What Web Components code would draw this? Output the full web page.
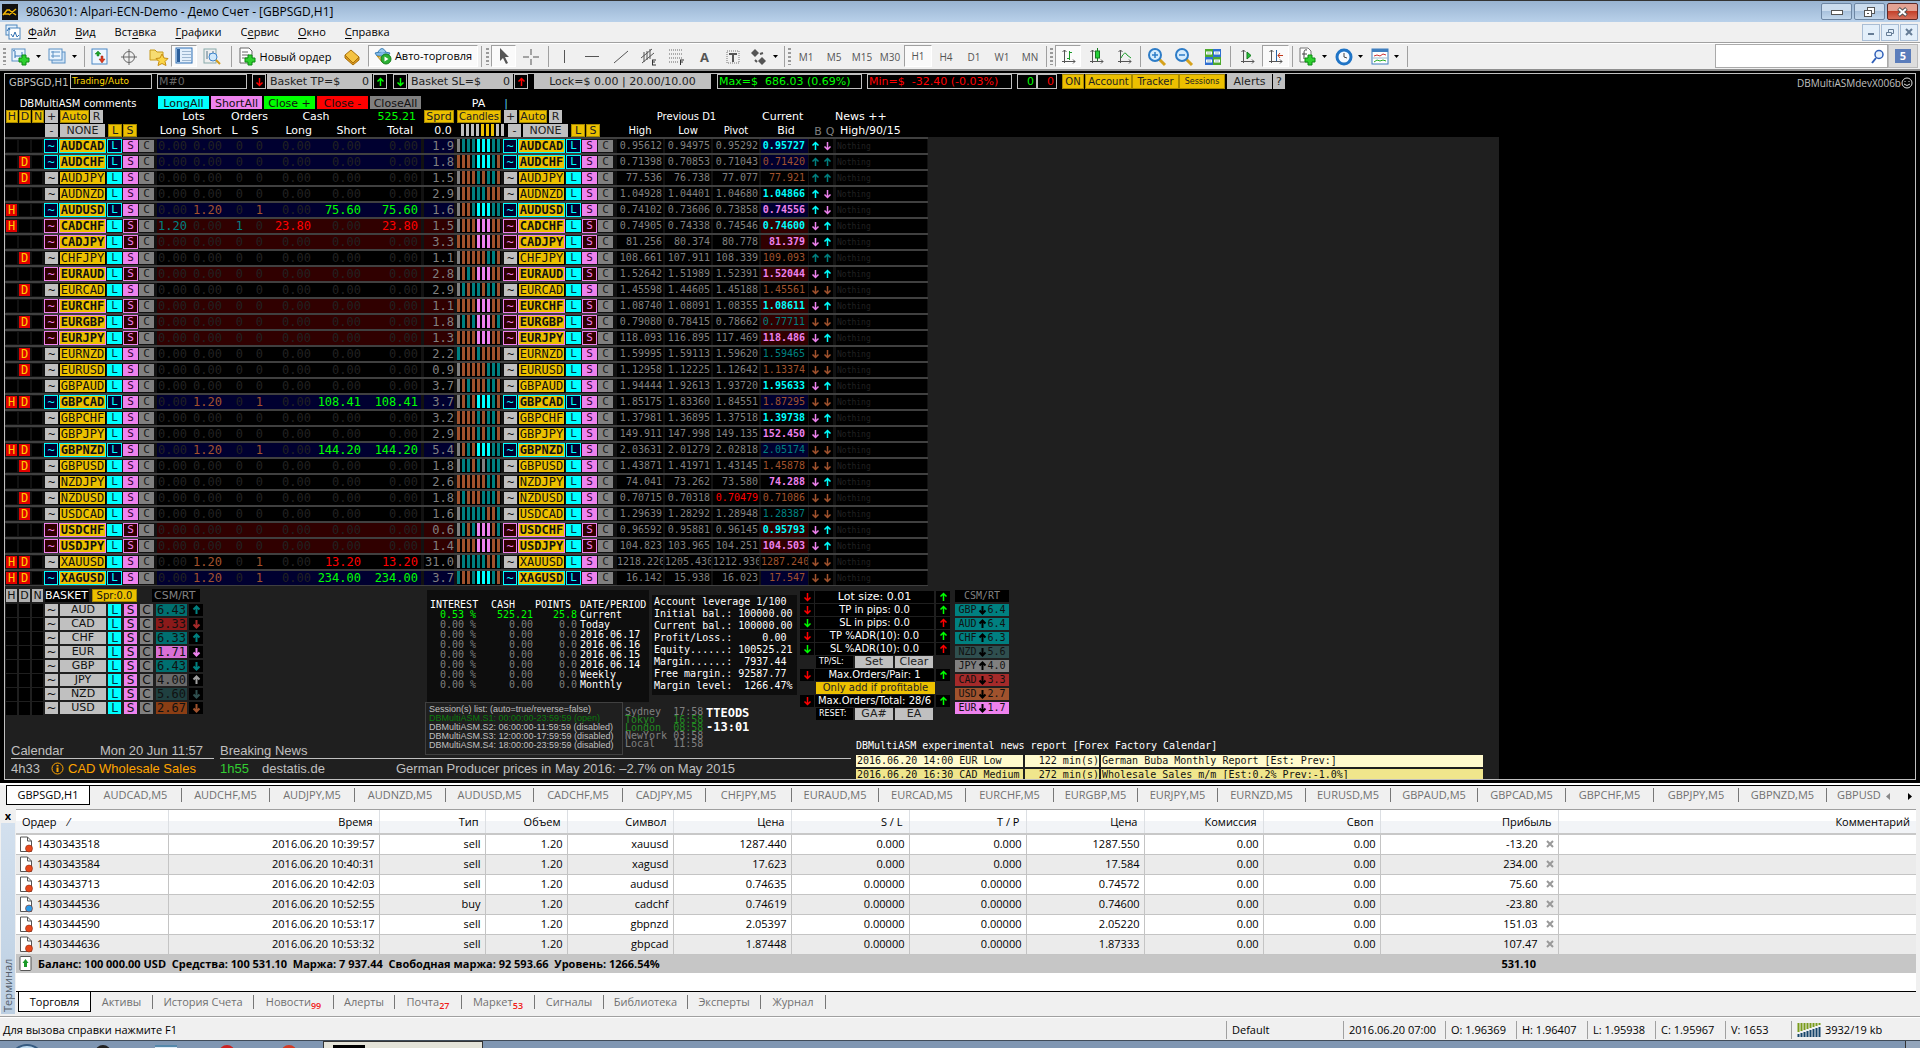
<!DOCTYPE html>
<html lang="ru">
<head>
<meta charset="utf-8">
<title>9806301: Alpari-ECN-Demo - Демо Счет - [GBPSGD,H1]</title>
<style>
html,body{margin:0;height:100%}
body{background:#f0f0f0;font:11px/14px "Open Sans","Noto Sans",sans-serif;color:#000;overflow:hidden}
</style>
</head>
<body>
<trade-app></trade-app>
<script>
const RESET = `*{box-sizing:border-box}button{font:inherit;color:inherit;border:0;padding:0;margin:0;background:none;cursor:default;display:block;white-space:nowrap;overflow:hidden;text-align:center}svg{display:block;flex:none}`;
const define = (name, css, render) => customElements.define(name, class extends HTMLElement {
  constructor() { super(); this.attachShadow({mode: 'open'}); }
  connectedCallback() { this.shadowRoot.innerHTML = `<style>${RESET}${css}</style>${render(this)}`; }
});
const svg = (w, h, body) => `<svg width="${w}" height="${h}" viewBox="0 0 ${w} ${h}" fill="none" aria-hidden="true">${body}</svg>`;

/* ---------- icons ---------- */
const plus = (x, y) => `<path d="M${x+3} ${y}h4v3h3v4h-3v3h-4v-3h-3v-4h3z" fill="#2fd02f" stroke="#0b8a12"/>`;
const axes = '<path d="M4.500 2v13M2 13.500h13M2.500 4l2-2 2 2M13 11.500l2 2-2 2" stroke="#555"/>';
const I = {
  logo: svg(16,16,'<rect width="16" height="16" fill="#111"/><path d="M1 11l4-5h3M2 10h5M7 6l7 5M14 5l-7 6" stroke="#f2b705" stroke-width="1.500"/>'),
  mdi: svg(16,16,'<rect x="1" y="1" width="11" height="10" fill="#e4f1fc" stroke="#4c86bd"/><rect x="4" y="4" width="11" height="11" fill="#fff" stroke="#4c86bd"/><path d="M2 7l2-3 1 2M6 10l2 3 2-5 2 5 2-2" stroke="#2f6fb0"/>'),
  newchart: svg(20,20,'<rect x="1" y="2" width="13" height="12" fill="#eaf4fd" stroke="#5a90c4"/><path d="M4 4v7M4 9h7M11 5v5M2 4l2-1" stroke="#3474b5"/>'+plus(8,8)),
  profiles: svg(20,20,'<rect x="5" y="5" width="13" height="11" fill="#cfe3f6" stroke="#5a90c4"/><rect x="2" y="2" width="13" height="11" fill="#eaf4fd" stroke="#5a90c4"/><path d="M4 5h9M4 9h9M6 4v7" stroke="#5a90c4"/>'),
  market: svg(18,18,'<rect x="1" y="1" width="15" height="15" fill="#eef6fe" stroke="#4b88c6"/><path d="M6 8V6H4l3-3 3 3H8v2z" fill="#1ea52a" stroke="#157a1e" stroke-width=".5"/><path d="M10 8v3H8l3 4 3-4h-2V8z" fill="#e03a1e" stroke="#9b2410" stroke-width=".5"/>'),
  target: svg(18,18,'<circle cx="9" cy="9" r="5.500" stroke="#666"/><path d="M9 1v16M1 9h16" stroke="#666"/>'),
  star: svg(20,18,'<path d="M1 2h5l2 2h6v8H1z" fill="#f6dc72" stroke="#c79a1c"/><path d="M13 6l2 4 4 .5-3 3 1 4-4-2-4 2 1-4-3-3 4-.5z" fill="#fbd648" stroke="#c78d12"/>'),
  nav: svg(18,18,'<rect x="1" y="1" width="16" height="15" fill="#e3effb" stroke="#2c6fb5"/><rect x="2" y="2" width="3" height="13" fill="#2c5f9b"/><path d="M7 4.500h9M7 7.500h9M7 10.500h9M7 13.500h9" stroke="#9db6cf"/>'),
  tester: svg(20,18,'<rect x="2" y="1" width="12" height="14" fill="#eee" stroke="#8aa"/><path d="M5 3v8M8 5v6M11 3v5" stroke="#578"/><circle cx="11" cy="9" r="4" fill="#cfe8fb" stroke="#3c83cc"/><path d="M14 12l4 4" stroke="#d49b1a" stroke-width="2"/>'),
  order: svg(18,20,'<path d="M1 1h9l3 3v12H1z" fill="#fff" stroke="#666"/><path d="M3 5h6M3 8h7M3 11h6" stroke="#666"/>'+plus(6,8)),
  book: svg(18,18,'<path d="M2 7l6-5 8 7-6 6z" fill="#f5c342" stroke="#a8700b"/><path d="M2 7v3l8 7 6-5V9l-6 6z" fill="#d9971c" stroke="#a8700b"/>'),
  auto: svg(18,18,'<path d="M1 6q7-3 15 0l-2 3H3z" fill="#7fb9e8" stroke="#3c7fb5"/><path d="M4 5q4-7 8 0" fill="#9accf0" stroke="#3c7fb5"/><path d="M3 9q5 3 10 0l-4 7z" fill="#f3cf6a" stroke="#b98d1c"/><circle cx="12" cy="12" r="5" fill="#2cb135" stroke="#157f1c"/><path d="M10.500 9.500v5l4-2.500z" fill="#fff"/>'),
  cursor: svg(14,18,'<path d="M3 1v13l3-3 3 6 2-1-3-6h4z" fill="#555"/>'),
  cross: svg(18,18,'<path d="M9 1v6M9 11v6M1 9h6M11 9h6" stroke="#555"/>'),
  v: svg(3,16,'<path d="M1.500 1v13" stroke="#555"/>'),
  h: svg(14,3,'<path d="M0 1.500h14" stroke="#555"/>'),
  d: svg(16,14,'<path d="M1 13L15 1" stroke="#555"/>'),
  chan: svg(18,18,'<path d="M1 10L12 1M2 15L14 5M4 4v10M7 3v9M10 1v10" stroke="#555"/><path d="M12 12h4M12 14h3M12 17h4M12.500 12v5" stroke="#333"/>'),
  fib: svg(18,18,'<path d="M1 2h14M1 6h14M1 10h14M1 14h9" stroke="#666" stroke-dasharray="1 1"/><path d="M12 12h4M12 14h3M12.500 12v5" stroke="#333"/>'),
  txt: svg(16,16,'<rect x="2" y="2" width="12" height="12" stroke="#777" stroke-dasharray="1 1"/><path d="M4 5h8M8 5v8" stroke="#555" stroke-width="2"/>'),
  shapes: svg(18,18,'<path d="M5 1l4 4-4 4-4-4zM12 9l4 4-4 4-4-4z" fill="#555"/><path d="M10 6l3-1M5 12l2 2" stroke="#555" stroke-width="2"/>'),
  bars: svg(17,17,axes+'<path d="M9.500 3v9M7 10.500h2M10 4.500h2" stroke="#1a9a28"/>'),
  candle: svg(17,17,axes+'<path d="M9.500 0v13" stroke="#157a1e"/><rect x="7.500" y="3" width="4" height="7" fill="#25d238" stroke="#157a1e"/>'),
  line: svg(17,17,axes+'<path d="M5 10q4-8 6-3l4 3" stroke="#1a9a28"/>'),
  zin: svg(20,20,'<path d="M12 12l6 6" stroke="#d6a21c" stroke-width="3"/><circle cx="8" cy="8" r="6" fill="#d6ecfd" stroke="#2d7cc7" stroke-width="2"/><path d="M5 8h6M8 5v6" stroke="#2d7cc7" stroke-width="1.500"/>'),
  zout: svg(20,20,'<path d="M12 12l6 6" stroke="#d6a21c" stroke-width="3"/><circle cx="8" cy="8" r="6" fill="#d6ecfd" stroke="#2d7cc7" stroke-width="2"/><path d="M5 8h6" stroke="#2d7cc7" stroke-width="1.500"/>'),
  tiles: svg(18,18,'<rect x="1" y="1" width="8" height="8" fill="#4eaa2e"/><rect x="9" y="1" width="8" height="8" fill="#2f6fd0"/><rect x="1" y="9" width="8" height="8" fill="#2f6fd0"/><rect x="9" y="9" width="8" height="8" fill="#4eaa2e"/><path d="M2 5h6M10 5h6M2 13h6M10 13h6" stroke="#fff" stroke-width="3"/><path d="M3 5h4M11 5h4M3 13h4M11 13h4" stroke="#9bb"/>'),
  scroll: svg(17,17,axes+'<path d="M8 4v7l4-3.500z" fill="#25c238" stroke="#157a1e"/>'),
  shift: svg(17,17,axes+'<path d="M9.500 2v11" stroke="#2563a8"/><path d="M11 7.500h5M13 5l-2 2.500 2 2.500" stroke="#c0371a"/>'),
  ind: svg(18,20,'<path d="M1 1h8l3 3v11H1z" fill="#fff" stroke="#777"/><path d="M8 3q-3-1-3 3v6M3 7h5" stroke="#444"/>'+plus(6,8)),
  clock: svg(18,18,'<circle cx="9" cy="9" r="7" fill="#f4faff" stroke="#1f74c6" stroke-width="3"/><path d="M9 5v4l3 1" stroke="#444"/>'),
  templ: svg(18,18,'<rect x="1" y="1" width="16" height="15" fill="#fff" stroke="#3f7fbf"/><rect x="1" y="1" width="16" height="3" fill="#3f7fbf"/><path d="M3 8l3-1 3 1 3-2 3 1" stroke="#c33"/><path d="M1 10h16" stroke="#9bc"/><path d="M3 14l3-2 3 1 3-1 3 1" stroke="#2a2"/>'),
  caret: svg(5,3,'<path d="M0 0h5L2.500 3z" fill="#000"/>'),
  lens: svg(15,15,'<path d="M6 9l-4 5" stroke="#2f5fb8" stroke-width="2"/><circle cx="9" cy="5.500" r="4" fill="#e8f2fc" stroke="#2f5fb8" stroke-width="1.500"/>'),
  smile: svg(12,12,'<circle cx="6" cy="6" r="5" stroke="#ddd"/><path d="M4 4v1M8 4v1" stroke="#ddd"/><path d="M3 7q3 3 6 0" stroke="#ddd"/>'),
  signal: svg(24,14,'<path d="M1.500 0v9M4.500 0v8M7.500 0v7M10.500 0v6M13.500 0v5M16.500 0v4M19.500 0v3M22.500 0v2" stroke="#7a9c1c" stroke-width="2"/><path d="M1.500 11v3M4.500 10v4M7.500 9v5M10.500 8v6M13.500 7v7M16.500 6v8M19.500 5v9M22.500 4v10" stroke="#17456a" stroke-width="2"/>')
};
const arrow = (dir, col, bold) => svg(9,10,`<path d="${dir === 'u' ? 'M4.500 9V1.500M1.500 4.500l3-3 3 3' : 'M4.500 1v7.500M1.500 5.500l3 3 3-3'}" stroke="${col}" stroke-width="${bold ? 2 : 1.5}"/>`);

/* ---------- window chrome ---------- */
define('title-bar', `
:host{display:flex;align-items:center;height:22px;border-top:1px solid #333;background:linear-gradient(#98b3d1,#b9d1ea);padding:0 2px;font-size:12px}
span{flex:1;padding-left:8px}
.b{width:31px;height:17px;border:1px solid #6d86a3;border-radius:2px;margin-left:2px;display:grid;place-items:center;background:linear-gradient(#cbdcee 45%,#a9c2dd 50%,#c2d7ec)}
.x{background:linear-gradient(#e3a293 45%,#c3412b 50%,#d7715c);border-color:#5d2a28}`,
() => `${I.logo}<span>9806301: Alpari-ECN-Demo - Демо Счет - [GBPSGD,H1]</span>
<button class="b" aria-label="Свернуть">${svg(12,6,'<rect x="0.500" y="1.500" width="11" height="4" fill="#fff" stroke="#555"/>')}</button>
<button class="b" aria-label="Восстановить">${svg(13,12,'<rect x="4.500" y="1.500" width="7" height="6" fill="#fff" stroke="#555"/><rect x="1.500" y="4.500" width="7" height="6" fill="#fff" stroke="#555"/><path d="M4 7.500h2" stroke="#555"/>')}</button>
<button class="b x" aria-label="Закрыть">${svg(11,10,'<path d="M1.500 1.500l8 7M9.500 1.500l-8 7" stroke="#555" stroke-width="4"/><path d="M2 2l7 6M9 2L2 8" stroke="#fff" stroke-width="2"/>')}</button>`);

define('menu-bar', `
:host{display:flex;align-items:center;height:21px;background:#f0f0f0;border-bottom:1px solid #a0a0a0;padding:0 2px 0 5px;font-size:11px}
nav{display:flex;flex:1;padding-left:7px;gap:19px}
u{text-underline-offset:2px}
.m{width:18px;height:17px;border:1px solid #a9bdd4;margin-left:1px;background:#e3effa;display:grid;place-items:center}`,
() => `${I.mdi}<nav>${['<u>Ф</u>айл','<u>В</u>ид','Вст<u>а</u>вка','<u>Г</u>рафики','С<u>е</u>рвис','<u>О</u>кно','<u>С</u>правка'].map(t => `<button>${t}</button>`).join('')}</nav>
<button class="m" aria-label="Свернуть окно">${svg(8,8,'<path d="M1 6h6" stroke="#667d96" stroke-width="2"/>')}</button>
<button class="m" aria-label="Восстановить окно">${svg(10,9,'<path d="M3.500 4V1.500h5v4H7M1.500 4.500h5v3h-5z" stroke="#667d96"/>')}</button>
<button class="m" aria-label="Закрыть окно">${svg(8,8,'<path d="M1 1l6 6M7 1L1 7" stroke="#667d96" stroke-width="2"/>')}</button>`);

define('tool-bar', `
:host{display:flex;height:28px;background:#f0f0f0;border-top:1px solid #fff;border-bottom:2px solid #8f8f8f;align-items:stretch;font-size:11px}
.t{display:flex;align-items:center;justify-content:center;gap:3px;overflow:visible}
.c{justify-content:flex-start;padding-left:3px;gap:5px}
.p{border:1px solid #a0a0a0;border-right-color:#fff;border-bottom-color:#fff;background:#fafafa;margin:1px 0 2px}
.s{display:flex;justify-content:center;padding:2px 0}.s::before{content:"";width:1px;background:#a0a0a0}
.g{display:flex;justify-content:center;padding:4px 0}.g::before{content:"";width:3px;background:repeating-linear-gradient(#9a9a9a 0 2px,#f0f0f0 2px 4px)}
.f{color:#555;font-size:10px}
.a{font-weight:700;color:#555;font-size:13px}
label{margin-left:auto;display:flex;align-items:center;width:173px;background:#fff;border:1px solid #aaa;margin-bottom:1px;padding-right:2px}
input{flex:1;min-width:0;border:0;outline:0;background:none;font:inherit}
.m{width:30px;background:#ddd;border:1px solid #bbb;display:grid;place-items:center;margin:0 2px 1px 0}
.m b{background:#5b7dbb;color:#fff;width:16px;height:14px;line-height:14px;font-size:11px}`,
() => {
  const items = [['g',8],['newchart',36,1],['profiles',36,1],['s',8],['market',24],['target',34],['star',25],['nav',26,0,1],['tester',30],['s',8],['order',100,0,0,'Новый ордер'],['book',33],['auto',110,0,1,'Авто-торговля'],['s',6],['g',7],['cursor',25,0,1],['cross',29],['s',6],['v',26],['h',30],['d',28],['chan',28],['fib',28],['A',27],['txt',29],['shapes',35,1],['s',5],['g',5],...['M1','M5','M15','M30','H1','H4','D1','W1','MN'].map(x => ['tf',28,0,x === 'H1',x]),['s',4],['g',7],['bars',26,0,1],['candle',30],['line',26],['s',6],['zin',27],['zout',28],['tiles',29],['s',6],['scroll',29],['shift',27,0,1],['s',7],['ind',36,1],['clock',36,1],['templ',36,1],['s',6]];
  return items.map(([k,w,c,p,l]) => k === 's' || k === 'g' ? `<i class="${k}" style="width:${w}px"></i>`
    : k === 'A' ? `<button class="t a" style="width:${w}px">A</button>`
    : `<button class="t${c ? ' c' : ''}${p ? ' p' : ''}${k === 'tf' ? ' f' : ''}" style="width:${w}px" aria-label="${l || k}">${I[k] || ''}${l || ''}${c ? I.caret : ''}</button>`).join('')
  + `<label><input type="search" aria-label="Поиск">${I.lens}</label><button class="m"><b>5</b></button>`;
});

/* ---------- shared dashboard rules ---------- */
const MONO = '"DejaVu Sans Mono",monospace', VERD = '"DejaVu Sans",Verdana,sans-serif';

define('info-bar', `
:host{display:flex;height:22px;padding:0 2px 0 4px;font:11px/13px ${VERD};color:#c0c0c0;align-items:flex-start}
:host>*{height:15px;margin-right:1px;flex:none}
.n{font-size:10px;width:60px;line-height:17px}
.o{border:1px solid #c0c0c0}
.y{background:#ecc000;color:#222;border:1px solid #a88a00;text-align:center;font-size:10px;line-height:14px}
.s{background:#c0c0c0;color:#222;white-space:pre;text-align:center;line-height:15px}
.b{display:flex;justify-content:space-between;width:105px;padding:0 3px}
.a{width:14px;border:1px solid #c0c0c0;display:grid;place-items:center}
.l{margin-left:5px}
.v{margin-left:auto;display:flex;align-items:center;font-size:10px;height:18px;margin-right:0;font-family:"Open Sans",sans-serif}`,
() => `<span class="n">GBPSGD,H1</span>
<button class="o" style="width:82px;color:#ffd700;font-size:9px;line-height:11px;text-align:left;padding-left:1px">Trading/Auto</button>
<button class="o" style="width:90px;margin-left:4px;color:#666;text-align:left;padding-left:1px">M#0</button>
<button class="a" style="margin-left:4px" aria-label="TP -">${arrow('d','#f00')}</button><span class="s b"><span>Basket TP=$</span><span>0</span></span><button class="a" aria-label="TP +">${arrow('u','#0f0')}</button>
<button class="a l" aria-label="SL -">${arrow('d','#0f0')}</button><span class="s b"><span>Basket SL=$</span><span>0</span></span><button class="a" aria-label="SL +">${arrow('u','#f00')}</button>
<span class="s l" style="width:177px">Lock=$ 0.00 | 20.00/10.00</span>
<span class="o l" style="width:145px;color:#0f0;white-space:pre;padding-left:1px">Max=$  686.03 (0.69%)</span>
<span class="o" style="width:145px;margin-left:4px;color:#f00;white-space:pre;padding-left:1px">Min=$  -32.40 (-0.03%)</span>
<span class="o" style="width:20px;margin-left:4px;color:#0f0;text-align:right;padding-right:2px;margin-right:0">0</span><span class="o" style="width:20px;color:#f00;text-align:right;padding-right:2px">0</span>
<button class="y" style="width:22px;margin-left:4px">ON</button><button class="y" style="width:47px;margin-right:0">Account</button><button class="y" style="width:47px;margin-right:0">Tracker</button><button class="y" style="width:46px;font-size:8px">Sessions</button>
<button class="s" style="width:45px;margin-left:1px">Alerts</button><button class="s" style="width:12px">?</button>
<span class="v">DBMultiASMdevX006b${I.smile}</span>`);

define('table-head', `
:host{display:block;width:923px;height:41px;color:#fff;font:11px/13px ${VERD}}
.r{display:flex;height:14px;padding-left:1px;align-items:flex-start}
.r>*{height:13px;flex:none;white-space:nowrap}
.top{color:#111}.top>*{line-height:15px}
.y{background:#ecc000;color:#222;border:1px solid #a88a00;line-height:12px}
.g{background:#c0c0c0;color:#222;line-height:13px}
.c{text-align:center}.e{text-align:right}
.sm{font-size:10px}.q{color:#808080;line-height:15px}
.bars{display:flex;gap:2px;width:44px}.bars i{width:3px;height:12px;background:#c0c0c0}.bars i.k{background:#ecc000}`,
() => {
  const s = (w, t = '', cls = '', st = '') => `<span class="${cls}" style="width:${w}px;${st}">${t}</span>`;
  const b = (w, t, cls = '', m = 0, st = '') => `<button class="${cls}" style="width:${w}px;margin-right:${m}px;${st}">${t}</button>`;
  return `<div class="r top">${s(144,'DBMultiASM comments','c sm','color:#fff;margin-right:8px')}${b(51,'LongAll','',2,'background:#0ff')}${b(51,'ShortAll','',2,'background:#ee82ee')}${b(51,'Close +','',2,'background:#0f0')}${b(51,'Close -','',2,'background:#f00')}${b(51,'CloseAll','',36,'background:#808080')}${s(43,'PA','c','color:#fff')}${s(8,'|','e','color:#5ce')}</div>
<div class="r">${b(12,'H','y',1)}${b(12,'D','y',1)}${b(12,'N','y',1)}${b(13,'+','g',2)}${b(29,'Auto','y',1)}${b(13,'R','g',54)}${s(73,'Lots','c')}${s(39,'Orders','c')}${s(94,'Cash','c')}${s(53,'525.21','e','color:#0f0;margin-right:8px')}${b(30,'Sprd','y',3)}${b(44,'Candles','y',3,'font-size:10px')}${b(13,'+','g',2)}${b(28,'Auto','y',2)}${b(13,'R','g',54)}${s(141,'Previous D1','c sm')}${s(78,'Current','','padding-left:5px')}${s(70,'News ++')}</div>
<div class="r">${b(13,'-','g',2,'margin-left:39px')}${b(45,'NONE','g',3)}${b(14,'L','y',1)}${b(14,'S','y',20)}${s(32,'Long','c')}${s(35,'Short','c')}${s(21,'L','c')}${s(20,'S','c')}${s(47,'Long','e')}${s(54,'Short','e')}${s(47,'Total','e','margin-right:15px')}${s(30,'0.0','c','margin-right:3px')}<span class="bars">${[0,0,0,0,1,1,1,0,0].map(k => `<i class="${k ? 'k' : ''}"></i>`).join('')}</span>${b(13,'-','g',2,'margin-left:3px')}${b(45,'NONE','g',3)}${b(14,'L','y',1)}${b(14,'S','y',16)}${s(48,'High','c sm')}${s(48,'Low','c sm')}${s(48,'Pivot','c sm')}${s(52,'Bid','c')}${s(12,'B','q c')}${s(12,'Q','q c','margin-right:4px')}${s(80,'High/90/15')}</div>`;
});

const COL = {g:'#808080',t:'#008080',s:'#a0522d',c:'#00ffff',v:'#ee82ee'};
/* pair, bias, flags, position, spread, candles, high, low, pivot, bid, bid colour, B arrow, Q arrow */
const PAIRS = `AUDCAD|b||0|1.9|gtttccctt|0.95612|0.94975|0.95292|0.95727|c|uc|dv
AUDCHF|b|D|0|1.8|ssstcccts|0.71398|0.70853|0.71043|0.71420|s|ut|ut
AUDJPY|n|D|0|1.5|gssststts|77.536|76.738|77.077|77.921|s|ut|ut
AUDNZD|n||0|2.9|gsstttsss|1.04928|1.04401|1.04680|1.04866|c|uc|dv
AUDUSD|b|H|S75.60|1.6|gsstccctt|0.74102|0.73606|0.73858|0.74556|v|uc|dv
CADCHF|r|H|L23.80|1.5|gsssvvvss|0.74905|0.74338|0.74546|0.74600|c|dv|uc
CADJPY|r||0|3.3|ssssvvvss|81.256|80.374|80.778|81.379|v|dv|uc
CHFJPY|n|D|0|1.1|gssssstts|108.661|107.911|108.339|109.093|s|ut|ut
EURAUD|r||0|2.8|gstsvvvss|1.52642|1.51989|1.52391|1.52044|v|dv|uc
EURCAD|n|D|0|2.9|gtsttstts|1.45598|1.44605|1.45188|1.45561|s|ds|ds
EURCHF|r||0|1.1|ssssvvvss|1.08740|1.08091|1.08355|1.08611|c|dv|uc
EURGBP|r|D|0|1.8|gtstvvvst|0.79080|0.78415|0.78662|0.77711|t|ds|ds
EURJPY|r||0|1.3|ssssvvvss|118.093|116.895|117.469|118.486|v|dv|uc
EURNZD|n|D|0|2.2|tssstssss|1.59995|1.59113|1.59620|1.59465|t|ds|ds
EURUSD|n|D|0|0.9|gsssssttt|1.12958|1.12225|1.12642|1.13374|s|ds|ds
GBPAUD|n||0|3.7|gstssstts|1.94444|1.92613|1.93720|1.95633|c|dv|uc
GBPCAD|b|HD|S108.41|3.7|gstscccts|1.85175|1.83360|1.84551|1.87295|s|ds|ds
GBPCHF|n||0|3.2|sssststts|1.37981|1.36895|1.37518|1.39738|c|dv|uc
GBPJPY|n||0|2.9|sssststts|149.911|147.998|149.135|152.450|v|dv|uc
GBPNZD|b|HD|S144.20|5.4|gstsccctt|2.03631|2.01279|2.02818|2.05174|t|ds|ds
GBPUSD|n|D|0|1.8|gttstgttt|1.43871|1.41971|1.43145|1.45878|s|ds|ds
NZDJPY|n||0|2.6|sssssstts|74.041|73.262|73.580|74.288|v|dv|uc
NZDUSD|n|D|0|1.8|stsssttts|0.70715|0.70318|0.70479|0.71086|s|ds|ds
USDCAD|n|D|0|1.6|gtttttsst|1.29639|1.28292|1.28948|1.28387|t|ds|ds
USDCHF|r||0|0.6|gtstvvvst|0.96592|0.95881|0.96145|0.95793|c|dv|uc
USDJPY|r||0|1.4|ssssvvvss|104.823|103.965|104.251|104.503|v|dv|uc
XAUUSD|n|HD|R13.20|31.0|gtttttsst|1218.220|1205.430|1212.930|1287.240|s|ds|ds
XAGUSD|b|HD|S234.00|3.7|tsstcccts|16.142|15.938|16.023|17.547|s|ds|ds`.split('\n').map(l => l.split('|'));

define('pair-row', `
:host{display:grid;grid-template-columns:13px 13px 12px 15px 48px 16px 16px 18px 267px 33px 46px 15px 48px 16px 16px 19px 48px 48px 48px 48px 12px 15px 91px;width:923px;height:16px;border-top:2px solid #404040;padding:0 1px;background:#121212;font:12px/14px ${MONO};--k:#c0c0c0;--bg:#000;--fill:#c0c0c0;--ink:#111}
:host([bias=b]){--bg:#000030;--k:#00ffff;--fill:#000030;--ink:#0ff}
:host([bias=r]){--bg:#300000;--k:#ee82ee;--fill:#300000;--ink:#ee82ee}
:host>*{overflow:hidden;white-space:nowrap;height:14px}
.f{background:#000;margin-right:2px;color:#fc0;text-align:center;border:solid #121212;border-width:1px 0;line-height:12px}
.on{background:#e00000}
.w{background:var(--fill);color:var(--ink);border:1px solid var(--k);width:14px;line-height:12px}
:host([bias=n]) .w{width:13px;margin-left:1px;border:solid #121212;border-width:1px 0}
.p{background:#ecc000;color:#111;width:47px;border:1px solid var(--k);line-height:12px}
:host([bias=n]) .p{border-color:#000}
:host(:not([bias=n])) .p{font-weight:700}
.l,.s,.c{width:15px;font-size:11px;line-height:12px;border:solid #121212;border-width:1px 0}
.l{background:#0ff;color:#034}
.s{background:#ee82ee;color:#303}
.c{background:#808080;color:#222}
:host([bias=b]) .l,:host([bias=r]) .s{background:var(--bg);color:var(--k);border:1px solid var(--k)}
.pl{background:var(--bg);width:264px;display:grid;grid-template-columns:30px 35px 21px 20px 48px 50px 57px;text-align:right;color:#222}
.sp{background:var(--bg);color:#808080;text-align:right;width:30px}
.k{display:flex;gap:2px;background:#000;width:44px}.k i{width:3px;height:13px}
.n{background:#000;color:#808080;font-size:10px;width:46px;text-align:right;padding-right:1px;line-height:13px}
.n.x{text-align:left}
.n.b{background:var(--bg);width:47px;padding-right:3px}
.n.bold{font-weight:700}
.a{background:#000;display:grid;place-items:center;width:12px}
.z{background:#000;color:#222;font-size:8px;line-height:15px;padding-left:1px}`,
el => {
  const [pair,bias,fl,pos,spr,can,hi,lo,pv,bid,bc,a1,a2] = PAIRS[el.getAttribute('index')];
  el.setAttribute('bias', bias);
  const kind = pos[0], val = pos.slice(1), v = ['0.00','0.00','0','0','0.00','0.00','0.00'], c = Array(7).fill('');
  if (kind === 'S' || kind === 'R') { v[1]='1.20'; v[3]='1'; v[5]=v[6]=val; c[1]=c[3]='#a0522d'; c[5]=c[6]=kind === 'S' ? '#0f0' : '#f00'; }
  if (kind === 'L') { v[0]='1.20'; v[2]='1'; v[4]=v[6]=val; c[0]=c[2]='#008080'; c[4]=c[6]='#f00'; }
  const trade = `<button class="w">~</button><button class="p">${pair}</button><button class="l">L</button><button class="s">S</button><button class="c">C</button>`;
  const long = hi.length > 7 ? ' x' : '';
  return ['H','D','N'].map(f => `<span class="f${fl.includes(f) ? ' on' : ''}">${fl.includes(f) ? f : ''}</span>`).join('') + trade
  + `<span class="pl">${v.map((t, i) => `<span${c[i] ? ` style="color:${c[i]}"` : ''}>${t}</span>`).join('')}</span><span class="sp">${spr}</span>`
  + `<span class="k">${[...can].map(x => `<i style="background:${COL[x]}"></i>`).join('')}</span>` + trade
  + [hi,lo,pv].map(t => `<span class="n${long}"${t === '0.70479' ? ' style="color:#f00"' : ''}>${t}</span>`).join('')
  + `<span class="n b${long}${'cv'.includes(bc) ? ' bold' : ''}" style="color:${COL[bc]}">${bid}</span>`
  + [a1,a2].map(a => `<span class="a">${arrow(a[0], COL[a[1]])}</span>`).join('') + '<span class="z">Nothing</span>';
});

define('basket-panel', `
:host{display:block;width:199px;font:12px/12px ${VERD};color:#111;padding:3px 0 0 1px}
.h,.r{display:flex}
.h{height:15px;font-size:11px;line-height:13px}.h>*{height:13px;flex:none}
.r{height:14px}.r>*{height:12px;flex:none}
.g{width:11px;margin-right:2px;background:#b0b0b0;text-align:center}
.z{width:11px;margin-right:2px;background:#000;height:13px}
.v{width:31px;font-family:${MONO};text-align:center;margin-left:3px}
.a{width:14px;margin-left:2px;background:#000;display:grid;place-items:center}`,
() => `<div class="h"><button class="g">H</button><button class="g">D</button><button class="g">N</button><span style="width:44px;background:#000;color:#fff">BASKET</span><span style="width:45px;margin-left:3px;background:#ecc000;border:1px solid #a88a00;line-height:11px;font-size:10px;text-align:center">Spr:0.0</span><span style="width:48px;margin-left:15px;background:#000;color:#808080;padding-left:2px">CSM/RT</span></div>`
+ [['AUD','6.43','#007070','u','#008080'],['CAD','3.33','#8b1a1a','d','#a52a2a'],['CHF','6.33','#007070','u','#008080'],['EUR','1.71','#da70d6','d','#ee82ee'],['GBP','6.43','#007070','d','#008080'],['JPY','4.00','#696969','u','#a0a0a0'],['NZD','5.60','#1f4040','d','#2f4f4f'],['USD','2.67','#8b3e14','d','#a0522d']].map(([n,v,b,d,c]) =>
`<div class="r"><i class="z"></i><i class="z"></i><i class="z"></i><button style="width:13px;background:#c0c0c0">~</button><button style="width:46px;margin-left:2px;background:#c0c0c0;font-size:11px">${n}</button><button style="width:13px;margin-left:2px;background:#0ff;color:#034">L</button><button style="width:13px;margin-left:3px;background:#ee82ee">S</button><button style="width:13px;margin-left:3px;background:#808080">C</button><span class="v" style="background:${b}">${v}</span><span class="a">${arrow(d,c,1)}</span></div>`).join(''));

define('stats-panel', `
:host{display:block;margin-left:221px;width:373px;font:10px/10px ${MONO};color:#fff}
.t,.u{display:flex;align-items:flex-start}
.i{width:222px;height:112px;margin:4px 0 0 2px;background:#0d0d0d;padding:10px 0 0 3px}
.i div{display:grid;grid-template-columns:46px 57px 44px 1fr;column-gap:0;text-align:right;color:#808080}
.i div :last-child{color:#fff;text-align:left;padding-left:3px}
.i div.h{grid-template-columns:61px 44px 45px 1fr;text-align:left;color:#fff}.i div.h :last-child{padding:0}
.i div.k{color:#0f0}
.a{width:145px;height:100px;margin:9px 0 0 3px;background:#0d0d0d;padding:1px 2px;line-height:12px;white-space:pre}
.s{width:198px;height:53px;border:1px solid #404040;padding:2px 3px;font:9px/9px "Liberation Sans",Arial,sans-serif;color:#c0c0c0;white-space:nowrap}
.c{width:83px;padding:6px 0 0 2px;line-height:8px;color:#808080;white-space:pre}
.e{font-size:12px;line-height:14px;font-weight:700;padding-top:4px}
.n{color:#228b22}.m{color:#0a7a0a}`,
() => `<div class="t"><div class="i"><div class="h"><span>INTEREST</span><span>CASH</span><span>POINTS</span><span>DATE/PERIOD</span></div>${[['0.53 %','525.21','25.8','Current'],...['Today','2016.06.17','2016.06.16','2016.06.15','2016.06.14','Weekly','Monthly'].map(d => ['0.00 %','0.00','0.0',d])].map((r, i) => `<div class="${i ? '' : 'k'}">${r.map(t => `<span>${t}</span>`).join('')}</div>`).join('')}</div>
<div class="a">Account leverage 1/100
Initial bal.: 100000.00
Current bal.: 100000.00
Profit/Loss.:     0.00
Equity......: 100525.21
Margin......:  7937.44
Free margin.: 92587.77
Margin level:  1266.47%</div></div>
<div class="u"><div class="s"><div>Session(s) list: (auto=true/reverse=false)</div><div class="m">DBMultiASM.S1: 00:00:00-23:59:59 (open)</div><div>DBMultiASM.S2: 06:00:00-11:59:59 (disabled)</div><div>DBMultiASM.S3: 12:00:00-17:59:59 (disabled)</div><div>DBMultiASM.S4: 18:00:00-23:59:59 (disabled)</div></div>
<div class="c"><div>Sydney  17:58</div><div class="n">Tokyo   16:58</div><div class="n">London  08:58</div><div>NewYork 03:58</div><div>Local   11:58</div></div>
<div class="e">TTEODS<br>-13:01</div></div>`);

define('risk-panel', `
:host{display:block;margin-left:2px;width:150px;padding-top:5px;font:11px/12px ${VERD};color:#fff}
div{display:flex;height:13px}
div>*{height:12px;flex:none}
.a{width:14px;background:#000;display:grid;place-items:center}
.m{width:119px;margin:0 2px 0 1px;background:#000;text-align:center;white-space:nowrap;overflow:hidden}
.s{font-size:10px}
.l{width:37px;margin-left:16px;background:#000;font-size:8px;padding-left:3px}
.g{background:#c0c0c0;color:#222;width:38px;margin-left:2px}
.y{background:#ecc000;color:#222;width:119px;margin-left:16px;font-size:10px}`,
() => {
  const row = (t, l, r, s) => `<div><button class="a" aria-label="-">${arrow('d', l)}</button><span class="m ${s || ''}">${t}</span><button class="a" aria-label="+">${arrow('u', r)}</button></div>`;
  return row('Lot size: 0.01','#f00','#0f0') + row('TP in pips: 0.0','#f00','#0f0','s') + row('SL in pips: 0.0','#0f0','#f00','s') + row('TP %ADR(10): 0.0','#f00','#0f0','s') + row('SL %ADR(10): 0.0','#0f0','#f00','s')
  + '<div><span class="l">TP/SL:</span><button class="g">Set</button><button class="g">Clear</button></div>'
  + row('Max.Orders/Pair: 1','#f00','#0f0','s') + '<div><button class="y">Only add if profitable</button></div>' + row('Max.Orders/Total: 28/6','#f00','#0f0','s')
  + '<div><span class="l">RESET:</span><button class="g">GA#</button><button class="g">EA</button></div>';
});

define('strength-panel', `
:host{display:block;margin-left:5px;width:54px;padding-top:4px;font:10px/12px ${MONO}}
div{height:12px;margin-bottom:2px;display:flex;align-items:center;justify-content:center;color:#111;gap:1px}
.h{background:#000;color:#808080}`,
() => '<div class="h">CSM/RT</div>' + [['GBP','d','6.4','#008080'],['AUD','u','6.4','#008080'],['CHF','u','6.3','#008080'],['NZD','d','5.6','#2f4f4f'],['JPY','u','4.0','#808080'],['CAD','d','3.3','#a52a2a'],['USD','d','2.7','#a0522d'],['EUR','d','1.7','#ee82ee']].map(([n,d,v,b]) => `<div style="background:${b}"><span>${n}</span>${arrow(d,'#000',1)}<span>${v}</span></div>`).join(''));

define('news-ticker', `
:host{display:flex;font:13px/15px "Liberation Sans",Arial,sans-serif;color:#c0c0c0;gap:6px;padding:4px 0 0 6px;flex:none}
.h{display:flex;justify-content:space-between;border-bottom:1px solid #c0c0c0;height:16px}
.a{width:203px}.b{width:631px}
.r{display:flex;height:19px;align-items:center;color:#ffa500;white-space:pre}`,
() => `<div class="a"><div class="h"><span>Calendar</span><span style="margin-right:11px">Mon 20 Jun 11:57</span></div><div class="r"><span style="color:#c0c0c0;width:40px">4h33</span>${svg(13,13,'<circle cx="6.500" cy="6.500" r="5.500" stroke="#ffa500"/><path d="M6.500 3v1.500M6.500 5.500V10" stroke="#ffa500" stroke-width="2"/>')}<span style="margin-left:4px">CAD Wholesale Sales</span></div></div>
<div class="b"><div class="h"><span>Breaking News</span></div><div class="r" style="color:#c0c0c0"><span style="color:#32cd32;width:42px">1h55</span><span style="width:134px">destatis.de</span><span>German Producer prices in May 2016: –2.7% on May 2015</span></div></div>`);

define('news-report', `
:host{display:block;margin-left:5px;flex:1;padding-right:16px;font:10px/12px ${MONO};color:#fff;height:40px;overflow:hidden}
.t{height:16px;line-height:14px}
.r{display:grid;grid-template-columns:167px 74px 1fr;column-gap:2px;color:#111;height:14px;white-space:pre}
.r span{height:12px;padding-left:1px}
.r :nth-child(2){text-align:right}`,
() => `<div class="t">DBMultiASM experimental news report [Forex Factory Calendar]</div>` + [['#fffacd','2016.06.20 14:00 EUR Low','122 min(s)','German Buba Monthly Report [Est: Prev:]'],['#f0e68c','2016.06.20 16:30 CAD Medium','272 min(s)','Wholesale Sales m/m [Est:0.2% Prev:-1.0%]']].map(([c,...x]) => `<div class="r">${x.map(t => `<span style="background:${c}">${t}</span>`).join('')}</div>`).join(''));

define('chart-window', `
:host{display:block;background:#000;padding:2px 4px 3px 4px}
.f{border:1px solid #c0c0c0;background:#000}
.p{background:#1f1f1f;width:78.2%}
.rows{background:#000;width:923px;border-bottom:1px solid #404040}
.w{display:flex;height:153px}
.b{display:flex;height:40px}`,
() => `<div class="f"><info-bar></info-bar><table-head></table-head><div class="p"><div class="rows">${PAIRS.map((_, i) => `<pair-row index="${i}"></pair-row>`).join('')}</div>
<div class="w"><basket-panel></basket-panel><stats-panel></stats-panel><risk-panel></risk-panel><strength-panel></strength-panel></div>
<div class="b"><news-ticker></news-ticker><news-report></news-report></div></div></div>`);

/* ---------- lower part ---------- */
define('chart-tabs', `
:host{display:flex;height:24px;padding:0 0 0 6px;border-top:2px solid #fff;background:#f0f0f0;color:#707070;overflow:hidden}
.x{display:flex;flex:1;border-top:1px solid #000;overflow:hidden}
button{flex:none;height:19px;display:flex;justify-content:center}
button span{flex:1;border-right:1px solid #777;height:14px;line-height:14px;margin-top:2px}
.on{background:#fff;color:#000;border:1px solid #000;border-top:0;width:84px}
.on span,.cut span{border:0}
.ar{width:38px;display:flex;justify-content:space-between;padding:7px 8px 0 4px;border-top:1px solid #000}`,
() => `<div class="x"><button class="on"><span>GBPSGD,H1</span></button>${[['AUDCAD',92],['AUDCHF',88],['AUDJPY',85],['AUDNZD',91],['AUDUSD',88],['CADCHF',89],['CADJPY',83],['CHFJPY',86],['EURAUD',87],['EURCAD',87],['EURCHF',88],['EURGBP',84],['EURJPY',80],['EURNZD',88],['EURUSD',85],['GBPAUD',87],['GBPCAD',88],['GBPCHF',88],['GBPJPY',85],['GBPNZD',88]].map(([t,w]) => `<button style="width:${w}px"><span>${t},M5</span></button>`).join('')}<button class="cut" style="padding-left:10px"><span>GBPUSD</span></button></div><div class="ar">${svg(4,7,'<path d="M4 0v7L0 3.500z" fill="#888"/>')}${svg(4,7,'<path d="M0 0v7l4-3.500z" fill="#000"/>')}</div>`);

const doc = c => svg(15,17,`<path d="M1.500 1h7l4 4v10.500h-11z" fill="#fff" stroke="#555"/><path d="M8.500 1v4h4" stroke="#555"/><circle cx="10" cy="12.500" r="3.500" fill="${c}" stroke="#8a2a10" stroke-width=".6"/>`);
define('trade-table', `
:host{display:block;background:#fff;border-top:1px solid #a0a0a0;flex:1}
table{border-collapse:collapse;table-layout:fixed;width:100%}
th{height:24px;font-weight:400;text-align:right;padding:0 6px 0 0;border-right:1px solid #dcdfe3;border-bottom:2px solid #c8c8c8;background:linear-gradient(#fff 50%,#f2f4f7 50%)}
td{height:20px;padding:0 4px 0 0;text-align:right;border:1px solid #c4c4c4;border-width:0 1px 1px 0;white-space:nowrap;overflow:hidden}
tr:nth-child(even) td{background:#ebebeb}
th:first-child,td:first-child{text-align:left;padding-left:3px}
th:first-child{padding-left:6px}
td div{display:flex;align-items:center;gap:3px}
td div.e{justify-content:flex-end;gap:8px}
tfoot td{background:#c6c6c6!important;border:0;font-weight:700;height:19px}
tfoot div{gap:5px}
th:last-child,td:last-child{border-right:0}
tfoot .q{padding-right:22px}`,
() => {
  const w = [152,211,106,82,106,118,118,117,118,119,117,178];
  const T = [['1430343518','10:39:57','sell','xauusd','1287.440','0.000','1287.550','-13.20'],['1430343584','10:40:31','sell','xagusd','17.623','0.000','17.584','234.00'],['1430343713','10:42:03','sell','audusd','0.74635','0.00000','0.74572','75.60'],['1430344536','10:52:55','buy','cadchf','0.74619','0.00000','0.74600','-23.80'],['1430344590','10:53:17','sell','gbpnzd','2.05397','0.00000','2.05220','151.03'],['1430344636','10:53:32','sell','gbpcad','1.87448','0.00000','1.87333','107.47']];
  return `<table><colgroup>${w.map(x => `<col style="width:${x}px">`).join('')}<col></colgroup><thead><tr>${['Ордер &nbsp; &nbsp;⁄','Время','Тип','Объем','Символ','Цена','S / L','T / P','Цена','Комиссия','Своп','Прибыль','Комментарий'].map(t => `<th>${t}</th>`).join('')}</tr></thead><tbody>${T.map(([o,t,k,s,p,z,q,r]) => `<tr><td><div>${doc(k === 'buy' ? '#2c9be8' : '#e8481c')}${o}</div></td>${['2016.06.20 ' + t,k,'1.20',s,p,z,z,q,'0.00','0.00'].map(x => `<td>${x}</td>`).join('')}<td><div class="e">${r}${svg(8,8,'<path d="M1 1l6 6M7 1L1 7" stroke="#999" stroke-width="2"/>')}</div></td><td></td></tr>`).join('')}</tbody><tfoot><tr><td colspan="11"><div>${svg(14,15,'<rect x="1" y="0.500" width="11" height="14" rx="1" fill="#fff" stroke="#555"/><path d="M6.500 3l3 4H8v4H5V7H3.500z" fill="#1a9a28"/>')}<span>Баланс: 100 000.00 USD &nbsp;Средства: 100 531.10 &nbsp;Маржа: 7 937.44 &nbsp;Свободная маржа: 92 593.66 &nbsp;Уровень: 1266.54%</span></div></td><td class="q">531.10</td><td></td></tr></tfoot></table>`;
});

define('terminal-panel', `
:host{display:flex;height:210px;border-bottom:1px solid #a0a0a0;padding:2px 4px 2px 0;background:#f0f0f0}
.s{width:16px;display:flex;flex-direction:column;align-items:center;flex:none}
.s button{height:14px;font-weight:700;line-height:12px}
.v{flex:1;width:14px;background:linear-gradient(#bccfe2,#d3e0ee);writing-mode:vertical-rl;transform:rotate(180deg);color:#55606c;line-height:14px;font-size:11px;padding-top:2px}
.m{flex:1;display:flex;flex-direction:column;min-width:0}
.t{display:flex;height:23px;border-top:1px solid #000;padding-left:2px;color:#707070;flex:none}
.t button{height:20px;display:flex;overflow:visible}
.t span{flex:1;height:14px;line-height:14px;margin-top:3px;border-right:1px solid #777}
.t .on{background:#fff;color:#000;border:1px solid #000;border-top:0}.t .on span{border:0}
sub{color:#f01818;font-size:9px;line-height:9px;vertical-align:-3px;font-weight:600}`,
() => `<div class="s"><button aria-label="Закрыть">x</button><span class="v">Терминал</span></div><div class="m"><trade-table></trade-table><div class="t">${[['Торговля',73],['Активы',62],['История Счета',101],['Новости<sub>99</sub>',80],['Алерты',61],['Почта<sub>27</sub>',67],['Маркет<sub>53</sub>',73],['Сигналы',69],['Библиотека',84],['Эксперты',73],['Журнал',65]].map(([t,w], i) => `<button class="${i ? '' : 'on'}" style="width:${w}px"><span>${t}</span></button>`).join('')}</div></div>`);

define('status-bar', `
:host{display:flex;height:23px;align-items:center;padding:2px 0 0 3px;background:#f0f0f0;border-top:1px solid #fff}
span{border-left:1px solid #a0a0a0;height:18px;line-height:18px;padding-left:5px;white-space:nowrap;display:flex;align-items:center;gap:4px}
.h{border:0;padding:0;flex:1}`,
() => `<span class="h">Для вызова справки нажмите F1</span>${[['Default',117],['2016.06.20 07:00',102],['O: 1.96369',71],['H: 1.96407',71],['L: 1.95938',68],['C: 1.95967',70],['V: 1653',66],[I.signal + '3932/19 kb',129]].map(([t,w]) => `<span style="width:${w}px">${t}</span>`).join('')}`);

define('task-bar', `
:host{display:flex;height:8px;background:#7f96b2;border-top:1px solid #3f4b58;overflow:hidden;padding-left:12px;align-items:flex-start}
.o{width:30px;height:24px;border-radius:50%;background:#bcd9ee;border:2px solid #355a80;margin-right:48px;margin-top:3px;flex:none}
i{flex:none}
.d{width:16px;height:16px;border-radius:50%;margin-top:4px}
.w{width:160px;height:12px;background:#e4e3d8;border:1px solid #333;margin-left:26px;padding:3px 0 0 9px}.w::before{content:"";display:block;width:32px;height:9px;background:#000}
.e{margin-left:auto;width:15px;height:9px;background:#93a5bb;border-left:1px solid #333}`,
() => `<i class="o"></i><i class="d" style="background:#222;margin-left:5px"></i><i style="width:22px;height:9px;background:#dcebf7;margin:4px 0 0 44px;border-top:2px solid #58a"></i><i class="d" style="background:#fff;border:4px solid #c22;margin-left:42px"></i><i class="d" style="background:#d43a24;margin-left:46px"></i><i class="w"></i><i class="e"></i>`);

define('trade-app', `:host{display:flex;flex-direction:column;min-height:100vh}`,
() => '<title-bar></title-bar><menu-bar></menu-bar><tool-bar></tool-bar><chart-window></chart-window><chart-tabs></chart-tabs><terminal-panel></terminal-panel><status-bar></status-bar><task-bar></task-bar>');
</script>
</body>
</html>
